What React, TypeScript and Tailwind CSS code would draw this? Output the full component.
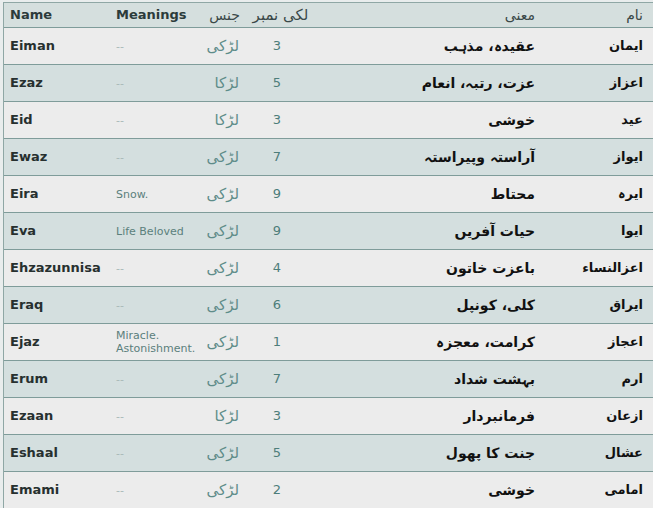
import React from 'react';

interface NameRow {
  name: string;
  meaning: string;
  gender: string;
  lucky: number;
  urduMeaning: string;
  urduName: string;
}

const GIRL = 'لڑکی';
const BOY = 'لڑکا';

const rows: NameRow[] = [
  { name: 'Eiman', meaning: '--', gender: GIRL, lucky: 3, urduMeaning: 'عقیدہ، مذہب', urduName: 'ایمان' },
  { name: 'Ezaz', meaning: '--', gender: BOY, lucky: 5, urduMeaning: 'عزت، رتبہ، انعام', urduName: 'اعزاز' },
  { name: 'Eid', meaning: '--', gender: BOY, lucky: 3, urduMeaning: 'خوشی', urduName: 'عید' },
  { name: 'Ewaz', meaning: '--', gender: GIRL, lucky: 7, urduMeaning: 'آراستہ وپیراستہ', urduName: 'ایواز' },
  { name: 'Eira', meaning: 'Snow.', gender: GIRL, lucky: 9, urduMeaning: 'محتاط', urduName: 'ایرہ' },
  { name: 'Eva', meaning: 'Life Beloved', gender: GIRL, lucky: 9, urduMeaning: 'حیات آفریں', urduName: 'ایوا' },
  { name: 'Ehzazunnisa', meaning: '--', gender: GIRL, lucky: 4, urduMeaning: 'باعزت خاتون', urduName: 'اعزالنساء' },
  { name: 'Eraq', meaning: '--', gender: GIRL, lucky: 6, urduMeaning: 'کلی، کونپل', urduName: 'ایراق' },
  { name: 'Ejaz', meaning: 'Miracle. Astonishment.', gender: GIRL, lucky: 1, urduMeaning: 'کرامت، معجزہ', urduName: 'اعجاز' },
  { name: 'Erum', meaning: '--', gender: GIRL, lucky: 7, urduMeaning: 'بہشت شداد', urduName: 'ارم' },
  { name: 'Ezaan', meaning: '--', gender: BOY, lucky: 3, urduMeaning: 'فرمانبردار', urduName: 'ازعان' },
  { name: 'Eshaal', meaning: '--', gender: GIRL, lucky: 5, urduMeaning: 'جنت کا پھول', urduName: 'عشال' },
  { name: 'Emami', meaning: '--', gender: GIRL, lucky: 2, urduMeaning: 'خوشی', urduName: 'امامی' },
];

const cols = 'grid grid-cols-[106px_90px_45px_67px_233px_1fr] items-center';
const urdu = { fontFamily: '"DejaVu Sans", sans-serif' };

export default function App() {
  return (
    <div className="w-[653px] h-[508px] overflow-hidden bg-[#e9eded] pl-[3px] pt-[2px]" style={{ fontFamily: '"DejaVu Sans", Verdana, sans-serif' }}>
      <div className="h-full border-l border-t border-[#8fa7a5] bg-[#ececec]">
        <div className={`${cols} h-[25px] bg-[#d5dfde] border-b border-[#7f9c9a]`}>
          <span className="pl-[6px] text-[13px] font-bold text-[#2c3b3b]">Name</span>
          <span className="pl-[6px] text-[13px] font-bold text-[#2c3b3b]">Meanings</span>
          <span dir="rtl" className="pr-[5px] text-[14px] text-[#3a4848] whitespace-nowrap" style={urdu}>جنس</span>
          <span dir="rtl" className="text-center pl-[4px] text-[15px] text-[#3a4848] whitespace-nowrap" style={urdu}>لکی نمبر</span>
          <span dir="rtl" className="pr-[10px] text-[14px] text-[#3a4848]" style={urdu}>معنی</span>
          <span dir="rtl" className="pr-[10px] text-[14px] text-[#3a4848]" style={urdu}>نام</span>
        </div>
        {rows.map((r, i) => (
          <div
            key={r.name}
            className={`${cols} h-[37px] border-b border-[#7f9c9a] ${i % 2 === 1 ? 'bg-[#d4dfdf]' : 'bg-[#ececec]'}`}
          >
            <span className="pl-[6px] text-[13px] font-bold text-[#27302f]">{r.name}</span>
            <span className={`pl-[6px] text-[11px] leading-[13px] ${r.meaning === '--' ? 'text-[#a9b9b8]' : 'text-[#5b7f7c]'}`}>
              {r.meaning}
            </span>
            <span dir="rtl" className="pr-[6px] text-[15px] text-[#5e8c89] whitespace-nowrap" style={urdu}>{r.gender}</span>
            <span className="text-center pr-[3px] text-[13px] text-[#4d7d7a]">{r.lucky}</span>
            <span dir="rtl" className="pr-[10px] text-[14px] font-bold text-[#111]" style={urdu}>{r.urduMeaning}</span>
            <span dir="rtl" className="pr-[10px] text-[13px] font-bold text-[#111]" style={urdu}>{r.urduName}</span>
          </div>
        ))}
      </div>
    </div>
  );
}
